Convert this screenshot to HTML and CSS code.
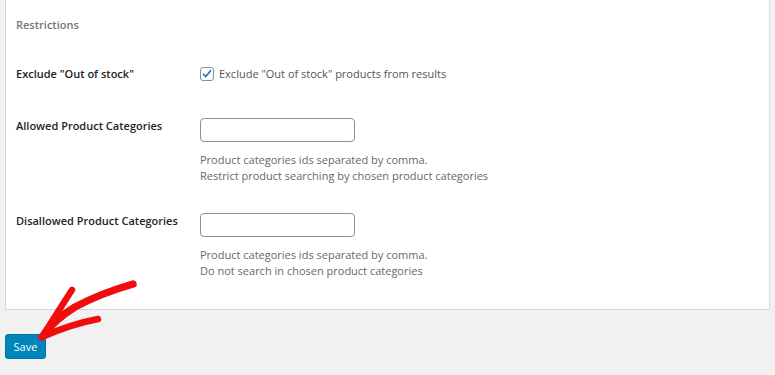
FILE: index.html
```html
<!DOCTYPE html>
<html lang="en">
<head>
  <meta charset="UTF-8">
  <title>Search Settings - Restrictions</title>
  <link rel="stylesheet" href="styles.css">
</head>
<body>

  <form class="settings">
    <div class="panel">
      <h4 class="section-title">Restrictions</h4>

      <div class="row row-check">
        <div class="label">Exclude "Out of stock"</div>
        <div class="field">
          <label class="check">
            <span class="checkbox">
              <svg viewBox="0 0 16 16" width="14" height="14"><path d="M3.2 8.3 L6.4 11.4 L12.8 3.6" fill="none" stroke="#2271b1" stroke-width="2.2" stroke-linecap="round" stroke-linejoin="round"/></svg>
            </span>
            Exclude "Out of stock" products from results
          </label>
        </div>
      </div>

      <div class="row">
        <div class="label">Allowed Product Categories</div>
        <div class="field">
          <input type="text" class="text-input">
          <p class="description">Product categories ids separated by comma.<br>Restrict product searching by chosen product categories</p>
        </div>
      </div>

      <div class="row row-last">
        <div class="label">Disallowed Product Categories</div>
        <div class="field">
          <input type="text" class="text-input">
          <p class="description">Product categories ids separated by comma.<br>Do not search in chosen product categories</p>
        </div>
      </div>
    </div>

    <div class="actions">
      <button type="button" class="save-btn">Save</button>
    </div>
  </form>

  <!-- hand drawn pointer over the save button -->
  <svg class="arrow" width="775" height="375" viewBox="0 0 775 375">
    <g fill="none" stroke="#f20d0d" stroke-linecap="round" stroke-linejoin="round">
      <path d="M133 284 C112 290 92 298 75 307 C62 315 50 325 42 337" stroke-width="7.5"/>
      <path d="M72 290 C64 302 53 320 42 337" stroke-width="6.5"/>
      <path d="M98 319 C82 322 60 329 42 337" stroke-width="6.5"/>
    </g>
  </svg>

</body>
</html>
```

FILE: styles.css
```css
* {
  box-sizing: border-box;
}

body {
  margin: 0;
  background: #f1f1f1;
  font-family: 'Open Sans', 'Segoe UI', sans-serif;
  font-size: 11px;
  color: #1d2327;
  position: relative;
  height: 375px;
  overflow: hidden;
}

.settings {
  padding: 0 5px;
}

.panel {
  background: #fff;
  border: 1px solid #d5d7da;
  border-top: none;
  padding: 17px 10px 30px 10px;
}

.section-title {
  margin: 0 0 33px 0;
  font-size: 11px;
  line-height: 16px;
  font-weight: 600;
  color: #72777c;
}

.row {
  display: grid;
  grid-template-columns: 184px 1fr;
  align-items: start;
  margin-bottom: 29px;
}

.row-check {
  margin-bottom: 36px;
}

.row-last {
  margin-bottom: 0;
}

.label {
  font-weight: 600;
  line-height: 16px;
}

.check {
  display: flex;
  align-items: center;
  gap: 5px;
  color: #50575e;
  line-height: 16px;
}

.checkbox {
  width: 14px;
  height: 14px;
  border: 1px solid #8c8f94;
  border-radius: 3px;
  display: flex;
  align-items: center;
  justify-content: center;
  background: #fff;
}

.checkbox svg {
  display: block;
}

.text-input {
  display: block;
  width: 155px;
  height: 24px;
  margin: 0;
  border: 1px solid #8c8f94;
  border-radius: 4px;
  background: #fff;
  padding: 0 6px;
  font-family: inherit;
}

.description {
  margin: 10px 0 0 0;
  color: #646970;
  line-height: 16px;
}

.actions {
  padding-top: 24px;
}

.save-btn {
  display: block;
  background: #0085ba;
  border: 1px solid #0073aa;
  border-radius: 3px;
  color: #fff;
  font-family: inherit;
  font-size: 11px;
  width: 41px;
  height: 25px;
  padding: 0;
  cursor: pointer;
}

.arrow {
  position: absolute;
  left: 0;
  top: 0;
  pointer-events: none;
}
```
